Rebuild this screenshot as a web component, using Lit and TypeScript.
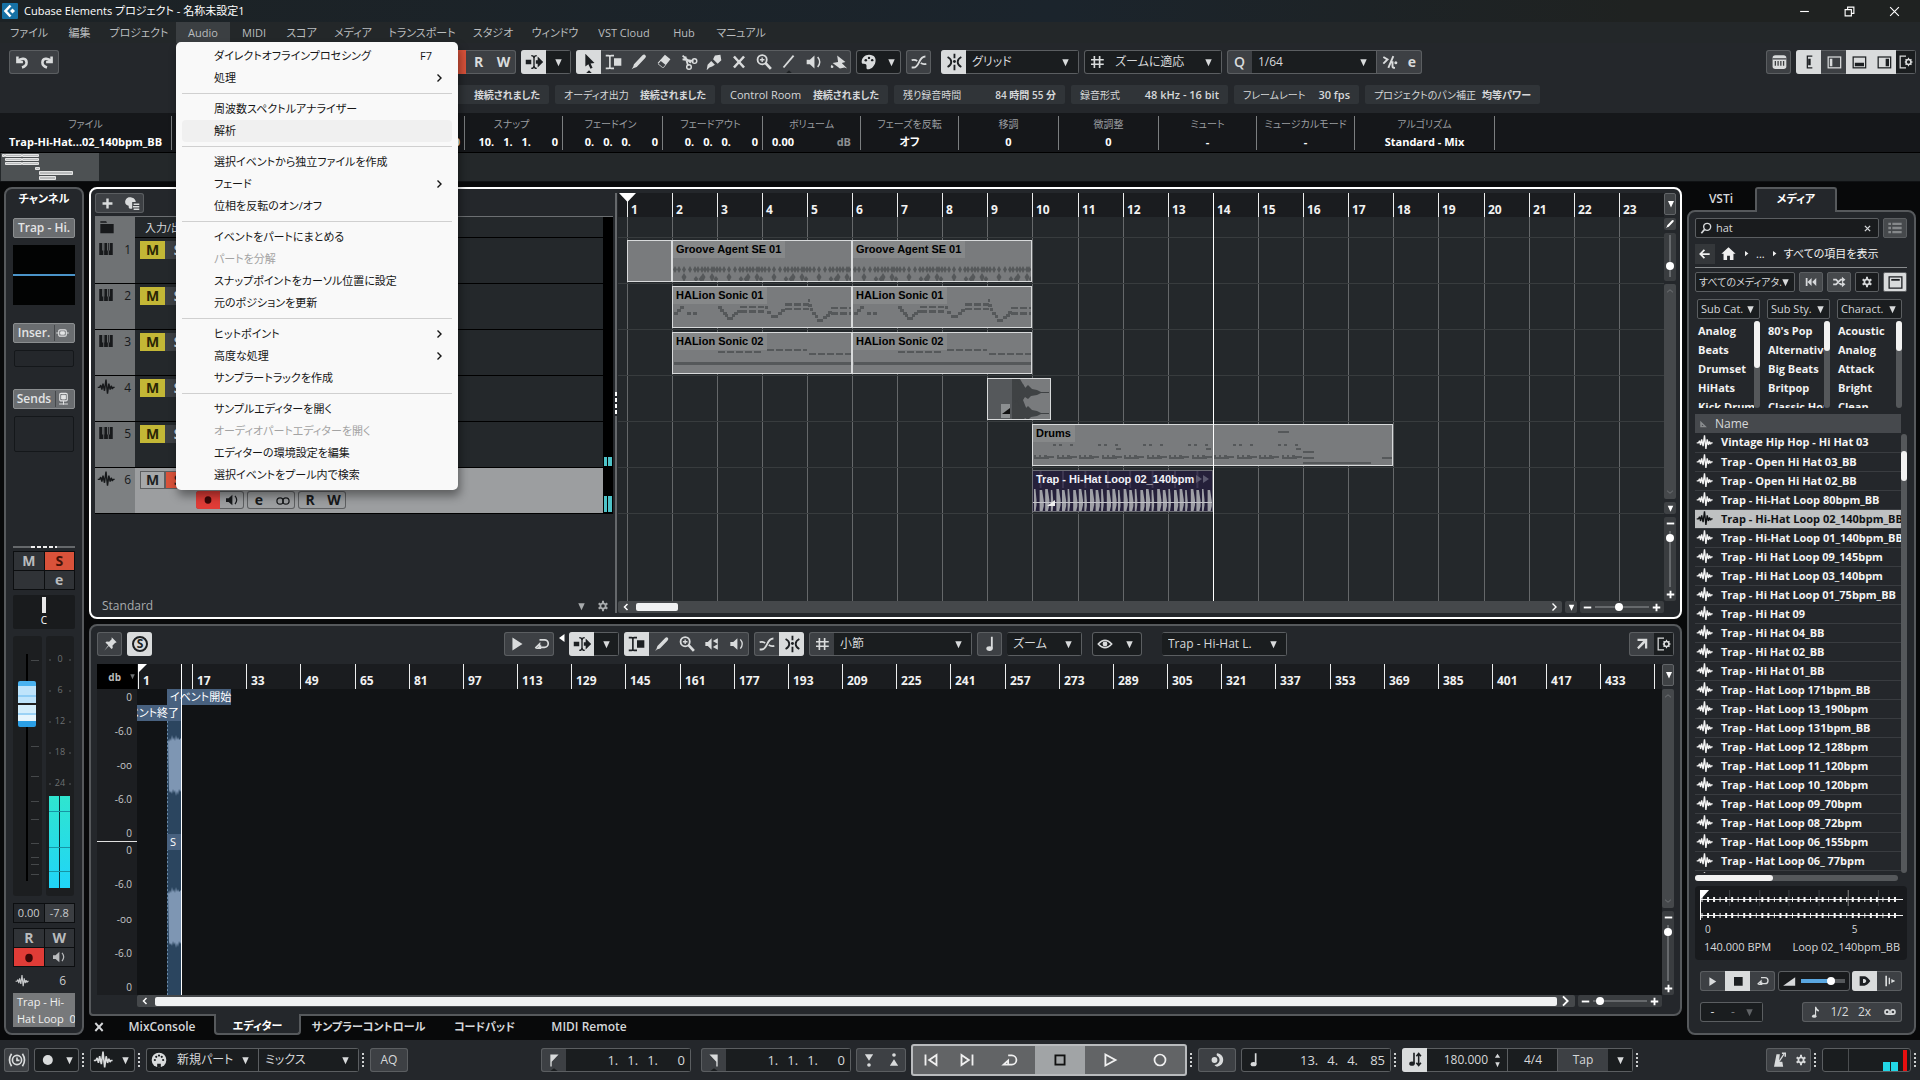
import { LitElement, html, svg, css, nothing } from "lit";
import { customElement } from "lit/decorators.js";
import { styleMap } from "lit/directives/style-map.js";

const ICONS: Record<string, unknown> = {
  undo: svg`<path d="M7 6v6h6M8 11c3-4 9-3 9 1.500c0 3-2 4.500-5 5.500" fill="none" stroke="currentColor" stroke-width="2.800"/>`,
  redo: svg`<path d="M17 6v6h-6M16 11c-3-4-9-3-9 1.500c0 3 2 4.500 5 5.500" fill="none" stroke="currentColor" stroke-width="2.800"/>`,
  auto: svg`<path d="M3 9.500h6v5h-6zM14 10h2v-4l6 6-6 6v-4h-2z"/><path d="M9 5q3 0 3 3v8q0 3-3 3M15 5q-3 0-3 3v8q0 3 3 3" fill="none" stroke="currentColor" stroke-width="1.500"/>`,
  pointer: svg`<path d="M8 3v14l3.300-2.600 2.300 5 2.300-1-2.200-4.900 4.300-.5zM9 24l3-3 3 3z"/>`,
  range: svg`<path d="M3 5h3q1 0 1.500.7q.5-.7 1.500-.7h3M3 19h3q1 0 1.500-.7q.5.7 1.500.7h3M7.500 5v14" fill="none" stroke="currentColor" stroke-width="1.800"/><path d="M12 8h8v8h-8z"/>`,
  pencil: svg`<path d="M5 19l1.500-4.500 9-9.500q2-2 3.500-.5t-.5 3.500l-9 9.500zM4 20l2-1-1-1z"/>`,
  eraser: svg`<path d="M13 4l6 5-7.500 9.500-6.500-5.500zM8.500 11l-3 3.500 5 4 3-3.500z" fill-rule="evenodd"/>`,
  scissors: svg`<path d="M5 5l9 8M5 9l12 2M8 6l3 10" fill="none" stroke="currentColor" stroke-width="2"/><circle cx="18" cy="11" r="2.500" fill="none" stroke="currentColor" stroke-width="1.600"/><circle cx="12" cy="17.500" r="2.500" fill="none" stroke="currentColor" stroke-width="1.600"/>`,
  glue: svg`<path d="M13 5l6-1 1 6-4 4-5-5zM9 11l4 4-3 2-3 1-3 3 1-6z"/><path d="M9 9l6 6" stroke="#3f4246" stroke-width="1.200"/>`,
  cross: svg`<path d="M6.500 6l11 12M17.500 6l-11 12" stroke="currentColor" stroke-width="2.800"/>`,
  zoom: svg`<circle cx="10" cy="9.500" r="5" fill="none" stroke="currentColor" stroke-width="2"/><path d="M7.500 9.500h5M10 7v5" stroke="currentColor" stroke-width="1.500"/><path d="M13.500 13l6 6.500" stroke="currentColor" stroke-width="3"/>`,
  line: svg`<path d="M6 18l11-13" stroke="currentColor" stroke-width="2"/><path d="M9 24l3-3 3 3z" fill="#1d2023"/>`,
  speaker: svg`<path d="M4 9.500h3.500l5-4.500v14l-5-4.500H4z"/><path d="M16 6.500q4.500 5.500 0 11" fill="none" stroke="currentColor" stroke-width="1.600"/>`,
  scrub: svg`<path d="M4 9.500h3l4.500-4.500v14l-4.500-4.500H4zM13 8.500l6-3.500v7zM13 15.500l6 3.500v-7z"/>`,
  bucket: svg`<path d="M10 5l9 7-4 1 6 6-3-1-5 1-8-6 6-1zM4 15q-2 3 0 3.500t2-1.500z"/>`,
  palette: svg`<path d="M12 4c6 0 8 4 7 8c-1 5-5 8-8 8c-3 0-1-3-2-5c-.5-1.500-5 .5-5-3c0-5 4-8 8-8z"/><circle cx="8.500" cy="10" r="1.400" fill="#1b1e20"/><circle cx="12" cy="7.500" r="1.300" fill="#1b1e20"/><circle cx="15.500" cy="10" r="1.300" fill="#1b1e20"/>`,
  xfade: svg`<path d="M4 18h2c7 0 5-12 13-12M4 10q4-1 6 1M14 13q2 2 6 1" fill="none" stroke="currentColor" stroke-width="2"/>`,
  snap: svg`<path d="M12.500 3v5M12.500 15v6M5 6.500q4 2 4 5.500q0 3.500-4 5.500M20 6.500q-4 2-4 5.500q0 3.500 4 5.500" fill="none" stroke="currentColor" stroke-width="2"/><circle cx="12.500" cy="11.500" r="1.600"/>`,
  hash: svg`<path d="M8.500 4v16M15.500 4v16M4 9h17M4 15h17" stroke="currentColor" stroke-width="2.200"/>`,
  quant: svg`<path d="M4 6l5 3-5 5M10 19l6-14M15 11v6q0 2 3 2" fill="none" stroke="currentColor" stroke-width="2.300"/><circle cx="19" cy="13" r="1.800"/>`,
  keys: svg`<rect x="5" y="4.500" width="15" height="15" rx="3"/><path d="M8 11v5M11 11v5M14 11v5M17 11v5M5 8.500h15" stroke="#3c3f42" stroke-width="1.400"/>`,
  lay1: svg`<path d="M16 5h-6v14h6" fill="none" stroke="currentColor" stroke-width="1.500"/><path d="M11 8h3v8h-3z"/>`,
  lay2: svg`<rect x="5" y="6" width="15" height="13" fill="none" stroke="currentColor" stroke-width="1.500"/><path d="M7 8h3v9H7z"/>`,
  lay3: svg`<rect x="5" y="6" width="15" height="13" fill="none" stroke="currentColor" stroke-width="1.500"/><path d="M7 13h11v4H7z"/>`,
  lay4: svg`<rect x="5" y="6" width="15" height="13" fill="none" stroke="currentColor" stroke-width="1.500"/><path d="M14 8h4v9h-4z"/>`,
  setup: svg`<path d="M12 5H5v14h7" fill="none" stroke="currentColor" stroke-width="1.500"/><circle cx="15" cy="12" r="3" fill="none" stroke="currentColor" stroke-width="2"/><path d="M15 7v2M15 15v2M10.500 12h1.500M18 12h2M11.500 8.500l1.500 1.500M17 14l1.500 1.500M18.500 8.500L17 10M13 14l-1.500 1.500" stroke="currentColor" stroke-width="1.400"/>`,
  gear: svg`<circle cx="12" cy="12" r="4.500" fill="none" stroke="currentColor" stroke-width="3"/><path d="M12 3v4M12 17v4M4.500 7.500l3 2M16.500 14.500l3 2M4.500 16.500l3-2M16.500 9.500l3-2" stroke="currentColor" stroke-width="3.400"/>`,
  plus: svg`<path d="M12 5v14M5 12h14" stroke="currentColor" stroke-width="3.400"/>`,
  preset: svg`<path d="M9 3c6 0 9 3 9 7H13v9c-5 1-5-1-5-4c-3 0-5-2-5-5c0-4 3-7 6-7zM15 12h8v2h-8zM14 15.500h9v2h-9zM15 19h8v2h-8z"/>`,
  folder: svg`<path d="M4 5h7l1 2H4zM4 8.500h16v11H4z"/>`,
  piano: svg`<path d="M3 4h4v10h1.500v6H3zM9 4h1v10h-1zM10.500 4h3v10h1v6h-5v-6h1zM15 4h1v10h-1zM17 4h4v16h-5.500v-6H17z"/>`,
  wave: svg`<path d="M1 12.500h2.500l1.500-3 1.500 6 1.500-8 2 9.500L12 2l2 19 1.800-13.500 1.700 8 1.500-5 1.500 4 1-2h2" fill="none" stroke="currentColor" stroke-width="1.900" stroke-linejoin="bevel"/>`,
  rec: svg`<ellipse cx="12" cy="12" rx="4.500" ry="5"/>`,
  dot: svg`<circle cx="13" cy="12" r="6"/>`,
  rings: svg`<circle cx="8.500" cy="12" r="3.800" fill="none" stroke="currentColor" stroke-width="1.500"/><circle cx="15.500" cy="12" r="3.800" fill="none" stroke="currentColor" stroke-width="1.500"/>`,
  pin: svg`<path d="M14 4l6 6-2 .8-3 3 .3 3-1.500 1.200-3.300-3.500L5 20l5-6.500-3.500-3.300L8 9l3 .3 3-3z"/>`,
  play: svg`<path d="M7 5v14l11-7z"/>`,
  loop: svg`<path d="M4 17l5-5v4h6a4 4 0 0 0 0-9h-6" fill="none" stroke="currentColor" stroke-width="2"/><path d="M4 18h7v-5z"/>`,
  prev: svg`<path d="M6 6v12M18 6.500v11l-8-5.500z" fill="none" stroke="currentColor" stroke-width="2"/>`,
  next: svg`<path d="M18 6v12M6 6.500v11l8-5.500z" fill="none" stroke="currentColor" stroke-width="2"/>`,
  loopo: svg`<path d="M10 7h4a5 5 0 0 1 0 10H5l5-4.500v4" fill="none" stroke="currentColor" stroke-width="1.900"/>`,
  stopo: svg`<rect x="7" y="7" width="10" height="10" fill="none" stroke="currentColor" stroke-width="2"/>`,
  playo: svg`<path d="M7 6v12l11-6z" fill="none" stroke="currentColor" stroke-width="2"/>`,
  reco: svg`<circle cx="12" cy="12" r="6" fill="none" stroke="currentColor" stroke-width="1.900"/>`,
  note: svg`<path d="M13 4h2v13h-2z"/><ellipse cx="11.500" cy="17" rx="3.500" ry="2.600"/>`,
  note8: svg`<path d="M12 5h1.500q1 3 4 4.500l-1 2-3-2v8h-1.500z"/><ellipse cx="11" cy="17.500" rx="3" ry="2.300"/>`,
  eye: svg`<path d="M3 12q9-10 18 0q-9 10-18 0z" fill="none" stroke="currentColor" stroke-width="2"/><circle cx="12" cy="12" r="3.200"/>`,
  out: svg`<path d="M6 5h13v13h-3V10.500L7.500 19l-2-2.200L13.500 8H6z"/>`,
  clock: svg`<circle cx="12" cy="12" r="5.500" fill="none" stroke="currentColor" stroke-width="2"/><path d="M12 9v3.500h3M5.500 4.500q-5 7.500 0 15M18.500 4.500q5 7.500 0 15" fill="none" stroke="currentColor" stroke-width="2"/>`,
  midi: svg`<circle cx="12" cy="12" r="8"/><g fill="#1b1e20"><circle cx="7.500" cy="12" r="1.200"/><circle cx="9" cy="8.500" r="1.200"/><circle cx="12" cy="7.200" r="1.200"/><circle cx="15" cy="8.500" r="1.200"/><circle cx="16.500" cy="12" r="1.200"/><path d="M10 16h4v4h-4z"/></g>`,
  locl: svg`<path d="M8 6h9L9.500 14v5H8z"/><path d="M8 24l4-3 4 3z" fill="#1a1d1f"/>`,
  locr: svg`<path d="M16 6H7l7.500 8v5H16z"/><path d="M8 24l4-3 4 3z" fill="#1a1d1f"/>`,
  punchi: svg`<path d="M7 5h10l-5 8z"/><circle cx="12" cy="18" r="2.200"/>`,
  puncho: svg`<path d="M7 19h10l-5-8z"/><circle cx="12" cy="6" r="2.200"/>`,
  moon: svg`<path d="M12 4c10 1 10 15 0 16q-3-1-3-2c7-1 8-8 3-11q-1-1 0-3z"/><circle cx="9" cy="12" r="3.500"/>`,
  tempo: svg`<path d="M10 4h1.800v12H10z"/><ellipse cx="8.700" cy="16" rx="3" ry="2.300"/><path d="M16 5v13M13.500 8L16 5l2.500 3M13.500 15l2.500 3 2.500-3" fill="none" stroke="currentColor" stroke-width="1.700"/>`,
  metro: svg`<path d="M9 5h4l-1 9h4l1 6H6z"/><path d="M12 14l6-9" stroke="currentColor" stroke-width="1.500"/><path d="M15.500 4h4v4" fill="none" stroke="currentColor" stroke-width="1.800"/>`,
  search: svg`<circle cx="14" cy="10" r="6" fill="none" stroke="currentColor" stroke-width="2.400"/><path d="M10 14l-6 7" stroke="currentColor" stroke-width="3"/>`,
  list: svg`<path d="M2 4h4v3.500H2zM8 4h14v3.500H8zM2 10.200h4v3.500H2zM8 10.200h14v3.500H8zM2 16.500h4V20H2zM8 16.500h14V20H8z"/>`,
  back: svg`<path d="M4 12h16M11 5l-7 7 7 7" fill="none" stroke="currentColor" stroke-width="3"/>`,
  home: svg`<path d="M12 3l10 9.500h-3V21h-5v-6h-4v6H5v-8.500H2z"/>`,
  rew: svg`<path d="M3 5h3v14H3zM13 5v14l-7-7zM21 5v14l-7-7z"/>`,
  shuffle: svg`<path d="M2 8h5l8 8h3M2 16h5l8-8h3" fill="none" stroke="currentColor" stroke-width="3"/><path d="M17 3l6 5-6 5zM17 11l6 5-6 5z"/>`,
  frame: svg`<path d="M3 4h18v16H3z" fill="none" stroke="currentColor" stroke-width="1.800"/><path d="M6 7h12v2.500H6z"/>`,
  stop: svg`<path d="M6 6h13v13H6z"/>`,
  ramp: svg`<path d="M3 18L20 6v12z"/>`,
  dgate: svg`<path d="M4 5h7q4 0 9 7q-5 7-9 7H4zM9 9v6h2q2 0 3-3q-1-3-3-3z" fill-rule="evenodd"/>`,
  beats: svg`<path d="M5 4h2.500v16H5zM10 7h2v10h-2zM14 9l6 3-6 3z"/>`,
  tape: svg`<circle cx="7" cy="12" r="3.600" fill="none" stroke="currentColor" stroke-width="2.800"/><circle cx="17" cy="12" r="3.600" fill="none" stroke="currentColor" stroke-width="2.800"/><path d="M7 15.800h10" stroke="currentColor" stroke-width="2.400"/>`,
  insert: svg`<rect x="6" y="7" width="12" height="10" rx="2" fill="none" stroke="currentColor" stroke-width="1.800"/><path d="M9 10h6v4H9zM2 12h4M18 12h4" stroke="currentColor" stroke-width="1.500"/>`,
  send: svg`<rect x="6" y="3" width="12" height="12" rx="2" fill="none" stroke="currentColor" stroke-width="1.800"/><path d="M9 6h6v6H9zM12 15v6M5 20h14" stroke="currentColor" stroke-width="1.500"/>`,
  down: svg`<path d="M6 6h12l-6 13z"/>`,
  up: svg`<path d="M5 18h14L12 7z"/>`,
  right: svg`<path d="M8 5l9 7-9 7z"/>`,
  left: svg`<path d="M17 4L6 12l11 8z"/>`,
  chevr: svg`<path d="M9 5l7 7-7 7" fill="none" stroke="currentColor" stroke-width="2.800"/>`,
  chevl: svg`<path d="M15 6l-6 6 6 6" fill="none" stroke="currentColor" stroke-width="3"/>`,
  chevu: svg`<path d="M5 15l7-6 7 6" fill="none" stroke="currentColor" stroke-width="2"/>`,
  chevd: svg`<path d="M5 9l7 6 7-6" fill="none" stroke="currentColor" stroke-width="2"/>`,
  minus: svg`<path d="M2 12h20" stroke="currentColor" stroke-width="5"/>`,
  add: svg`<path d="M2 12h20M12 2v20" stroke="currentColor" stroke-width="5"/>`,
  sort: svg`<path d="M3 4v16h16zM7 13l4 4H7z" fill-rule="evenodd"/>`,
  min: svg`<path d="M5 12h14" stroke="currentColor" stroke-width="1.800"/>`,
  max: svg`<path d="M5 9h10v10H5zM9 9V5h10v10h-4" fill="none" stroke="currentColor" stroke-width="1.800"/>`,
  close: svg`<path d="M5 5l14 14M19 5L5 19" stroke="currentColor" stroke-width="1.800"/>`,
  clear: svg`<path d="M5 5l14 14M19 5L5 19" stroke="currentColor" stroke-width="3.500"/>`,
};

const ic = (name: string, size = 24) =>
  html`<svg class="ic" viewBox="0 0 24 24" width=${size} height=${size} fill="currentColor" aria-hidden="true">${ICONS[name]}</svg>`;

const btn = (icon: string, label: string, cls = "", size = 22) =>
  html`<button class="b ${cls}" aria-label=${label} title=${label}>${ic(icon, size)}</button>`;

const tbtn = (text: string, cls = "", label = text) =>
  html`<button class="b t ${cls}" aria-label=${label}>${text}</button>`;

const drop = (value: string, label: string, cls = "") =>
  html`<label class="dd ${cls}"><select aria-label=${label}><option>${value}</option></select>${ic("down", 13)}</label>`;

const pos = (...parts: string[]) => html`<span class="pos">${parts.map((p) => html`<span>${p}</span>`)}</span>`;

const range = (label: string, value: number, cls = "") =>
  html`<input class="rng ${cls}" type="range" aria-label=${label} .value=${String(value)} />`;

type Item = { t: string; key?: string; sub?: boolean; off?: boolean; hot?: boolean };
const MENU: Item[][] = [
  [{ t: "ダイレクトオフラインプロセシング", key: "F7" }, { t: "処理", sub: true }],
  [{ t: "周波数スペクトルアナライザー" }, { t: "解析", hot: true }],
  [{ t: "選択イベントから独立ファイルを作成" }, { t: "フェード", sub: true }, { t: "位相を反転のオン/オフ" }],
  [
    { t: "イベントをパートにまとめる" },
    { t: "パートを分解", off: true },
    { t: "スナップポイントをカーソル位置に設定" },
    { t: "元のポジションを更新" },
  ],
  [{ t: "ヒットポイント", sub: true }, { t: "高度な処理", sub: true }, { t: "サンプラートラックを作成" }],
  [
    { t: "サンプルエディターを開く" },
    { t: "オーディオパートエディターを開く", off: true },
    { t: "エディターの環境設定を編集" },
    { t: "選択イベントをプール内で検索" },
  ],
];

const MENUBAR = ["ファイル", "編集", "プロジェクト", "Audio", "MIDI", "スコア", "メディア", "トランスポート", "スタジオ", "ウィンドウ", "VST Cloud", "Hub", "マニュアル"];

const STATUS = [
  ["", "接続されました"],
  ["オーディオ出力", "接続されました"],
  ["Control Room", "接続されました"],
  ["残り録音時間", "84 時間 55 分"],
  ["録音形式", "48 kHz - 16 bit"],
  ["フレームレート", "30 fps"],
  ["プロジェクトのパン補正", "均等パワー"],
];
const latin = (s: string) => (/^[\x20-\x7e]+$/.test(s) ? "latin" : "");

const FILES = [
  "Vintage Hip Hop - Hi Hat 03", "Trap - Open Hi Hat 03_BB", "Trap - Open Hi Hat 02_BB", "Trap - Hi-Hat Loop 80bpm_BB",
  "Trap - Hi-Hat Loop 02_140bpm_BB", "Trap - Hi-Hat Loop 01_140bpm_BB", "Trap - Hi Hat Loop 09_145bpm", "Trap - Hi Hat Loop 03_140bpm",
  "Trap - Hi Hat Loop 01_75bpm_BB", "Trap - Hi Hat 09", "Trap - Hi Hat 04_BB", "Trap - Hi Hat 02_BB", "Trap - Hi Hat 01_BB",
  "Trap - Hat Loop 171bpm_BB", "Trap - Hat Loop 13_190bpm", "Trap - Hat Loop 131bpm_BB", "Trap - Hat Loop 12_128bpm",
  "Trap - Hat Loop 11_120bpm", "Trap - Hat Loop 10_120bpm", "Trap - Hat Loop 09_70bpm", "Trap - Hat Loop 08_72bpm",
  "Trap - Hat Loop 06_155bpm", "Trap - Hat Loop 06_ 77bpm", "",
];

const FILTERS = [
  { name: "Sub Cat.", items: ["Analog", "Beats", "Drumset", "HiHats", "Kick Drum"], cls: "long" },
  { name: "Sub Sty.", items: ["80's Pop", "Alternative", "Big Beats", "Britpop", "Classic House"], cls: "" },
  { name: "Charact.", items: ["Acoustic", "Analog", "Attack", "Bright", "Clean"], cls: "" },
];

const BAR = 45.11;
const barX = (bar: number) => Math.floor(9 + (bar - 1) * BAR);
const dash = (x1: number, x2: number, y: number, h = 2) => {
  const out = [];
  for (let x = x1; x < x2; x += 9) out.push(svg`<rect x=${x} y=${y} width=${Math.min(7, x2 - x)} height=${h}/>`);
  return out;
};

const groove = () => svg`${[0, 1, 2, 3].map((b) => svg`
  ${[2, 6, 11, 17, 22, 25, 29, 32, 35, 39, 41, 44].map((x) => svg`<path d="M${b * 45 + x} 25l2 3.500-2 3.500-2-3.500z"/>`)}
  ${[11, 30, 39].map((x) => svg`<path d="M${b * 45 + x} 32l2.500 4-2.500 5-2.500-5z"/>`)}
  ${[23, 28, 43].map((x) => svg`<path d="M${b * 45 + x} 35l2.300 3-2.300 3-2.300-3z"/>`)}`)}`;

const N1: number[][] = [
  [1, 25, 4], [4, 22, 4], [7, 19, 4], [14, 25, 4], [20, 25, 4],
  [45, 19, 4], [47, 22, 4], [50, 25, 4], [52, 27, 3], [54, 30, 6], [59, 27, 3], [61, 25, 4], [64, 23, 4],
  [92, 19, 3], [94, 24, 4], [98, 28, 7], [105, 25, 4], [108, 22, 4], [135, 12, 2], [135, 17, 4], [137, 21, 3], [139, 25, 4],
  [142, 28, 3], [144, 32, 6], [150, 29, 4], [153, 27, 4], [155, 24, 4],
];
const halion1 = () => svg`${N1.map(([x, y, w]) => svg`<rect x=${x} y=${y} width=${w} height="3"/>`)}
  ${dash(67, 91, 19, 2)}${dash(67, 91, 23, 3)}${dash(112, 136, 16, 3)}${dash(112, 136, 21, 2)}${dash(158, 179, 20, 2)}${dash(158, 179, 25, 3)}`;
const halion2 = () => svg`${dash(45, 90, 18)}${dash(94, 134, 16)}${dash(136, 179, 20)}<rect x="1" y="29" width="178" height="3"/>`;
const drums = () => svg`${[0, 1, 2, 3, 4, 5].map((b) => svg`
    <rect x=${b * 45 + 20} y="19" width="3" height="2"/><rect x=${b * 45 + 26} y="19" width="3" height="2"/>
    <rect x=${b * 45 + 37} y="19" width="3" height="2"/>${b % 2 ? svg`<rect x=${b * 45 + 38} y="23" width="5" height="2"/>` : nothing}
    ${[0, 23].map((o) => svg`<path d="M${b * 45 + o + 1} 30h2v2h3v-2h2v2h3v-2h3v1h7v2h-5v1h-15z"/>`)}`)}
  <rect x="245" y="6" width="11" height="2"/><rect x="270" y="26" width="11" height="2"/><rect x="270" y="32" width="11" height="2"/>
  <rect x="270" y="37" width="68" height="2"/><rect x="349" y="32" width="10" height="2"/>`;
const burst = (y: number) => svg`<path d="M24 ${y - 11}l3 3 2-3 3 8 3-3 2 4 3-3 4 4 5 1 4 2h8v1h-8l-4 2-6 1-3 3-3-2-3 4-2-5-3 6-3-2-2 2z"/>`;
const clap = () => svg`<rect width="25" height="42" fill="#55585b"/><path d="M24 0h8l7 12-4 9 4 10-7 10h-8z" fill="#3f4244"/><g fill="#3f4244">${burst(11)}${burst(32)}</g>
  <rect x="13" y="25" width="9" height="14" fill="#8c8f91"/><path d="M14 35l8-6v6z" fill="#111"/>`;
const hats = () => {
  const out = [];
  for (let i = 0; i < 32; i++) {
    const x = i * 5.6 + 1;
    const w = i % 3 === 0 ? 2.5 : 4.2;
    out.push(svg`<path d="M${x} ${18 + (i % 2)}h${w * 0.6}l${w * 0.4} 11v5l-${w * 0.4} 7h-${w * 0.6}z" fill="#9fa0a6"/>`);
    if (i % 4 === 1) out.push(svg`<path d="M${x} 0h2v17h-2z" fill="#3c3550"/>`);
  }
  return svg`${out}<rect y="31" width="180" height="1" fill="#c4c4ca"/><path d="M14 35l8-6v6z" fill="#eee"/>
    <path d="M163 4v8l6-4zM170 4v8l6-4z" fill="#5c5a70"/>`;
};

type Clip = { row: number; from: number; to: number; name?: string; art?: () => unknown; cls?: string };
const CLIPS: Clip[] = [
  { row: 0, from: 1, to: 2 },
  { row: 0, from: 2, to: 6, name: "Groove Agent SE 01", art: groove },
  { row: 0, from: 6, to: 10, name: "Groove Agent SE 01", art: groove },
  { row: 1, from: 2, to: 6, name: "HALion Sonic 01", art: halion1 },
  { row: 1, from: 6, to: 10, name: "HALion Sonic 01", art: halion1 },
  { row: 2, from: 2, to: 6, name: "HALion Sonic 02", art: halion2 },
  { row: 2, from: 6, to: 10, name: "HALion Sonic 02", art: halion2 },
  { row: 3, from: 9, to: 10.42, art: clap },
  { row: 4, from: 10, to: 18, name: "Drums", art: drums },
  { row: 5, from: 10, to: 14, name: "Trap - Hi-Hat Loop 02_140bpm", art: hats, cls: "audio" },
];

@customElement("app-root")
export class AppRoot extends LitElement {
  static styles = css`
    :host {
      display: flex; flex-direction: column; height: 100vh; overflow: hidden; background: #08090a; color: #d6d8da;
      font: 12px/16px "Open Sans", "Noto Sans CJK JP", sans-serif; font-feature-settings: "palt";
    }
    *, *::before, *::after { box-sizing: border-box; }
    ul { list-style: none; margin: 0; padding: 0; }
    h2 { margin: 0; font-size: 12px; line-height: 16px; }
    button, select, input { font: inherit; font-feature-settings: inherit; color: inherit; margin: 0; padding: 0; border: 0; background: none; border-radius: 0; }
    .ic { display: block; flex: none; }
    .push { margin-left: auto; }

    .title { display: flex; align-items: center; gap: 6px; height: 22px; padding: 0 4px 0 2px; color: #fff; font-size: 11px; background: linear-gradient(90deg, #1c2225, #1b242c 55%, #1f2221 85%); }
    .logo { width: 16px; height: 16px; }
    .win { display: flex; margin-left: auto; gap: 30px; padding-right: 14px; }
    .menubar { display: grid; grid-template-columns: 56px 45px 74px 54px 48px 47px 56px 82px 60px 64px 74px 46px 68px; height: 21px; padding-left: 1px; background: #232729; color: #b9bcbe; font-size: 11px; }
    .menubar > li { position: relative; display: grid; }
    .menubar > li > button { white-space: nowrap; }
    .menubar .open { background: #3b3f42; }
    .popup { position: absolute; z-index: 10; left: 0; top: 20px; width: 282px; padding: 3px 6px 4px; border-radius: 5px; background: #f9f9f9; color: #151515; box-shadow: 2px 6px 10px rgba(0, 0, 0, 0.4); }
    .popup ul + ul { margin-top: 4px; padding-top: 4px; border-top: 1px solid #d0d0d0; }
    .popup button { display: flex; align-items: center; width: 100%; height: 22px; padding: 0 7px 0 32px; border-radius: 4px; text-align: left; white-space: nowrap; }
    .popup .hot { background: #f0f0f0; }
    .popup .off { color: #a3a3a3; }
    .popup .key { margin-left: auto; padding-right: 13px; }
    .popup .ic { margin-left: auto; }

    .toolbar { display: flex; gap: 5px; height: 38px; padding: 7px 4px 0 9px; background: #24272b; }
    .grp { display: flex; height: 24px; border-radius: 3px; overflow: hidden; background: #3d4044; box-shadow: inset 0 0 0 1px #5b5e61; flex: none; }
    .grp.dark { background: #1a1d1f; }
    .b { display: grid; place-items: center; width: 25px; flex: none; color: #d9dbdc; overflow: hidden; }
    .b.on { background: #d9dbdc; color: #1c1f22; }
    .b.s20 { width: 20px; }
    .b.dk { background: #1a1d1f; box-shadow: inset 0 1px #5b5e61, inset 0 -1px #5b5e61, inset -1px 0 #5b5e61; }
    .b.t { font-weight: 700; font-size: 14px; }
    .b.q { font-weight: 600; }
    .b.plain { font-weight: 400; font-size: 12px; }
    .b.red { background: #d9523a; color: #2a0d08; }
    .b.rec { background: #e03c37; color: #3a0707; }
    .dd { display: grid; grid-template-columns: minmax(0, 1fr) 20px; align-items: center; background: #1a1d1f; box-shadow: inset 0 1px #5b5e61, inset 0 -1px #5b5e61, inset -1px 0 #5b5e61; }
    .dd select { grid-area: 1 / 1 / 2 / 3; appearance: none; width: 100%; height: 100%; padding: 0 18px 0 6px; outline: 0; }
    .dd .ic { grid-area: 1 / 2; pointer-events: none; color: #d9dbdc; }
    .w38 { width: 38px; } .w50 { width: 50px; } .w75 { width: 75px; } .w88 { width: 88px; } .w100 { width: 100px; } .w113 { width: 113px; } .w125 { width: 125px; } .w138 { width: 138px; }
    .gap5 { margin-left: 5px; }
    .gap15 { margin-left: 15px; }
    .from-menu { margin-left: 377px; }

    .status { display: grid; grid-template-columns: 143px 160px 167px 171px 157px 125px 175px; gap: 6px; height: 32px; padding: 4px 0 9px 406px; background: #24272b; font-size: 10px; }
    .status li { display: flex; justify-content: space-between; align-items: center; padding: 0 9px; background: #303438; border-radius: 2px; white-space: nowrap; }
    .status b { font-weight: 600; margin-left: auto; }
    .status .latin { font-size: 11px; }

    .info { display: grid; grid-template-columns: 172px 293px 98px 100px 100px 98px 98px 100px 100px 98px 98px 140px; height: 40px; padding: 3px 0 2px; background: #15171a; border-bottom: 1px solid #000; font-size: 10px; }
    .info li { display: flex; flex-direction: column; justify-content: space-between; align-items: center; border-right: 1px solid #7b7e80; color: #9a9da0; white-space: nowrap; }
    .info b { color: #fff; font-size: 11px; font-weight: 700; line-height: 17px; }
    .info .end { align-items: stretch; padding-right: 4px; text-align: right; }
    .info .end > span:first-child { text-align: center; }
    .info .wide { display: flex; justify-content: space-between; align-self: stretch; padding: 0 9px; }
    .info .wide span { color: #8d9092; }
    .pos { display: flex; justify-content: flex-end; gap: 9px; white-space: nowrap; }
    .pos span:last-child { min-width: 18px; text-align: right; }
    .overview { display: flex; height: 29px; background: #24282a; border-bottom: 1px solid #101214; }

    .main { flex: 1; min-height: 0; display: grid; grid-template-columns: 80px minmax(0, 1fr) 229px; gap: 5px; padding: 5px 4px 0; }
    .panel { border: 2px solid #56595c; border-radius: 8px; background: #24272b; }
    .channel { display: flex; flex-direction: column; align-items: stretch; margin-bottom: 5px; padding: 2px 7px 6px; color: #c9cbcd; }
    .channel h2 { text-align: center; font-size: 11px; color: #fff; padding-bottom: 11px; white-space: nowrap; }
    .cbtn { display: flex; align-items: center; justify-content: center; height: 20px; background: #6a6d70; border: 1px solid #8b8e90; border-radius: 2px; color: #e3e4e5; font-weight: 600; font-size: 12px; white-space: nowrap; }
    .cbtn .ic { border-left: 1px solid #45484b; margin-left: 4px; }
    .eq { display: flex; align-items: center; height: 60px; margin: 7px 0 18px; background: #020303; }
    .eq i { flex: 1; height: 2px; background: #4a93c8; }
    .slot { height: 17px; margin: 7px 1px 22px; border: 1px solid #14171a; border-radius: 2px; }
    .slot.big { height: 36px; margin-bottom: 0; }
    .grab { margin-top: auto; height: 2px; background: linear-gradient(90deg, #65686b 18px, transparent 18px 44px, #65686b 44px), repeating-linear-gradient(90deg, #eee 0 4px, transparent 4px 6px); }
    .quad { display: grid; grid-template-columns: 1fr 1fr; grid-auto-rows: 18px; gap: 1px; margin-top: 3px; padding: 1px; background: #0c0e10; }
    .quad + .quad { margin-top: 5px; }
    .quad .b { width: auto; background: #303337; color: #b9bbbd; }
    .quad .b.red { background: #d9523a; color: #451208; }
    .quad .b.rec { background: #e03c37; color: #3a0707; }
    .quad .val { font-size: 11px; text-align: center; line-height: 17px; background: #24272b; }
    .quad .val + .val { background: #3b3e42; }
    .pan { display: flex; flex-direction: column; align-items: center; height: 34px; margin-top: 5px; padding-top: 2px; background: #191b1d; border-radius: 2px; font-size: 10px; color: #fff; line-height: 15px; }
    .pan i { width: 4px; height: 16px; background: #e8e8e8; }
    .strip { display: grid; grid-template-columns: 1fr 1fr; gap: 4px; height: 260px; margin: 7px 0 4px; }
    .strip > * { background: #1c1e20; border-radius: 3px; overflow: hidden; }
    .fader { display: grid; }
    .fader input, .fader svg { grid-area: 1 / 1; }
    .fader input { appearance: none; writing-mode: vertical-lr; direction: rtl; width: 28px; height: 240px; margin-top: 12px; }
    .fader input::-webkit-slider-thumb { appearance: none; width: 18px; height: 46px; border-radius: 2px; background: linear-gradient(#49b2f0 0 5px, #bfe4fb 5px 14px, #8fcdf5 14px 16px, #bfe4fb 16px 22px, #222 22px 24px, #d4eefc 24px 32px, #9bd2f5 32px 34px, #e6f5fd 34px 40px, #2b9fe6 40px); }
    .num { display: flex; justify-content: space-between; align-items: center; padding: 6px 9px 4px 2px; }
    .cname { background: #77797b; color: #f0f0f0; font-size: 11px; line-height: 17px; padding: 0 4px; height: 34px; overflow: hidden; white-space: nowrap; }

    .center { display: grid; grid-template-columns: minmax(0, 1fr); grid-template-rows: minmax(0, 432fr) minmax(0, 397fr) 24px; min-height: 0; min-width: 0; }
    .project { min-height: 0; display: grid; grid-template-columns: 520px 3px minmax(0, 1fr) 12px; border-color: #fff; padding: 4px; }
    .tracks { display: flex; flex-direction: column; min-height: 0; padding-right: 2px; }
    .thead { height: 24px; border-bottom: 1px solid #6c6f72; }
    .thead .grp { width: 49px; height: 20px; }
    .thead .b { width: 24px; }
    .tbody { display: grid; grid-template-columns: minmax(0, 1fr) 10px; background: #000; }
    .tr { display: grid; grid-template-columns: 40px 1fr; height: 46px; border-bottom: 1px solid #000; background: #24282b; }
    .tr.first { height: 21px; }
    .tr.sel { background: #9c9ea0; }
    .tr .hd { display: flex; align-items: flex-start; justify-content: space-between; padding: 2px 4px 0 2px; background: #6f7274; color: #17191b; }
    .tr.first .hd { padding-top: 0; }
    .tr.first .nm { padding: 3px 10px; font-size: 11px; white-space: nowrap; }
    .tr.sel .hd { background: #7d8082; }
    .tr .hd span { line-height: 20px; }
    .tr .ct { display: grid; align-content: start; gap: 2px; padding: 3px 5px; }
    .ms { display: flex; height: 18px; }
    .ms .b { background: #3d4044; }
    .ms .b.y { background: #c3b736; color: #2a2705; }
    .sel .ms .b { color: #1c1f22; background: #a6a8aa; box-shadow: inset 0 0 0 1px #5d5f61; }
    .sel .ms .b.red { background: #d9523a; }
    .sel .sub { display: flex; gap: 3px; padding-left: 56px; }
    .sel .sub .grp { height: 18px; background: transparent; box-shadow: inset 0 0 0 1px #5d5f61; }
    .sel .sub .b { width: 24px; color: #17191b; }
    .sel .sub .b.rec { background: #e03c37; color: #3a0707; }
    .meter { display: flex; flex-direction: column; padding: 0 1px; }
    .meter i { display: block; height: 46px; border-bottom: 2px solid #000; }
    .meter i:first-child { height: 21px; }
    .meter .lv { background: linear-gradient(90deg, transparent 3px, #000 3px 4px, transparent 4px), linear-gradient(#4ec3c8, #4ec3c8) bottom / 100% 9px no-repeat; }
    .meter .hi { background: linear-gradient(90deg, transparent 3px, #000 3px 4px, transparent 4px), linear-gradient(#4ec3c8, #4ec3c8) bottom / 100% 16px no-repeat; }
    .tfoot { display: flex; align-items: center; gap: 8px; margin-top: auto; height: 14px; padding: 0 3px 0 7px; color: #a8abad; }
    .split { width: 2px; background: linear-gradient(#65686b, #65686b) top / 2px 199px no-repeat, repeating-linear-gradient(#fff 0 4px, #24272b 4px 6px) 0 199px / 2px 24px no-repeat, linear-gradient(#65686b, #65686b) 0 223px / 2px 100% no-repeat; }

    .time { display: grid; grid-template-rows: 24px minmax(0, 1fr) 12px; min-width: 0; position: relative; overflow: hidden; }
    .ruler { position: relative; overflow: hidden; background: #1a1c1f; color: #f2f2f2; font-weight: 700; }
    .ruler span { position: absolute; top: 0; bottom: 0; border-left: 1px solid #eceded; padding: 9px 0 0 4px; line-height: 16px; }
    .time .ruler span { padding-left: 3px; }
    .head { position: absolute; left: 1px; top: 0; z-index: 2; }
    .canvas { position: relative; overflow: hidden; background: #24282b; }
    .vl { position: absolute; top: 0; bottom: 0; width: 1px; background: #65686a; }
    .hl { position: absolute; left: 0; right: 0; height: 1px; background: #383c3e; }
    .clip { position: absolute; height: 42px; background: #797b7d; border: 1px solid #d8dadb; overflow: hidden; color: #000; font: 700 11px/16px "Liberation Sans", sans-serif; }
    .clip svg { position: absolute; inset: 0; fill: #55585a; }
    .clip span { position: absolute; left: 0; top: 0; padding: 0 4px 1px 3px; background: #868889; white-space: nowrap; }
    .clip.audio { background: #25203a; border-color: #6b6c74; color: #f2f2f8; }
    .clip.audio span { background: none; }
    .cursor { position: absolute; top: 0; bottom: 12px; width: 1px; background: #fff; z-index: 3; }
    .hscroll { display: flex; gap: 3px; min-width: 0; }
    .sb { display: flex; align-items: center; flex: 1; min-width: 0; background: #45484b; border-radius: 2px; padding: 0 2px; color: #fff; }
    .sb .thumb { height: 8px; border-radius: 2px; background: #f0f1f2; width: 42px; margin-left: 4px; }
    .sb .thumb.full { width: auto; flex: 1; height: 9px; }
    .sb button { display: grid; place-items: center; }
    .zoomh { display: flex; align-items: center; justify-content: space-between; width: 84px; background: #3a3d40; border-radius: 2px; padding: 0 3px; color: #fff; }
    .zoomh .rng { width: 54px; }
    .sq { display: grid; place-items: center; width: 12px; background: #3f4245; border-radius: 2px; color: #fff; }
    .rail { display: flex; flex-direction: column; gap: 3px; padding-bottom: 12px; }
    .rail .sq { height: 12px; flex: none; }
    .rail .sq.tall { height: 22px; border: 1px solid #626568; }
    .rail .box { display: flex; flex-direction: column; align-items: center; justify-content: space-between; width: 12px; height: 48px; background: #3a3d40; border-radius: 2px; padding: 2px 0; color: #fff; flex: none; }
    .rail .zoomv { height: 84px; }
    .rail .vs { flex: 1; min-height: 0; background: #45484b; color: #777a7d; }
    .rng { appearance: none; height: 10px; background: linear-gradient(#66696c, #66696c) center / 100% 2px no-repeat; }
    .rng::-webkit-slider-thumb { appearance: none; width: 8px; height: 8px; border-radius: 50%; background: #fff; }
    .rng.v { writing-mode: vertical-lr; width: 10px; height: 56px; background: linear-gradient(#66696c, #66696c) center / 2px 100% no-repeat; }
    .rng.short { height: 42px; }

    .editor { min-height: 0; margin-top: 5px; display: flex; flex-direction: column; gap: 8px; padding: 6px 6px 7px; border-bottom-left-radius: 4px; }
    .ebar { display: flex; gap: 5px; }
    .ebar .mid { margin-left: 347px; }
    .tri { width: 5px; color: #fff; display: flex; justify-content: center; }
    .egrid { flex: 1; min-height: 0; display: grid; grid-template-columns: 40px minmax(0, 1fr) 12px; grid-template-rows: 25px minmax(0, 1fr) 12px; }
    .db { display: flex; align-items: center; justify-content: flex-end; gap: 7px; background: #000; font-size: 10px; font-weight: 700; color: #bbb; }
    .db .ic { color: #6d7072; }
    .scale { display: grid; grid-template-rows: 1fr 1fr; background: #1c1e21; font-size: 10px; line-height: 16px; text-align: right; }
    .scale li { display: flex; flex-direction: column; justify-content: space-between; padding-right: 5px; color: #c6c8ca; }
    .scale li:first-child { border-bottom: 1px solid #e0e0e0; }
    .wavearea { position: relative; background: #111315; overflow: hidden; }
    .wv { position: absolute; left: 30px; top: 0; width: 14px; height: 100%; }
    .tag { position: absolute; height: 16px; padding: 0 3px; background: #48617f; color: #fff; font-size: 11px; white-space: nowrap; line-height: 16px; }
    .tag.start { left: 30px; top: 0; width: 64px; }
    .tag.endt { left: 0; top: 16px; width: 44px; overflow: hidden; display: flex; justify-content: flex-end; padding: 0 2px; }
    .tag.s { left: 30px; top: calc(50% - 8px); width: 14px; }
    .ecur { position: absolute; left: 44px; top: 0; bottom: 0; width: 1px; background: #fff; }
    .egrid .hscroll { grid-column: 2 / 3; }
    .egrid .rail { grid-column: 3; grid-row: 1 / 4; }
    .zone { display: flex; align-items: flex-start; font-weight: 600; min-height: 0; }
    .zone button { height: 22px; white-space: nowrap; }
    .zone .x { width: 20px; display: grid; place-items: center; }
    .zone .m { width: 105px; padding-left: 1px; }
    .zone .cur { position: relative; width: 87px; height: 21px; margin-top: -2px; padding-top: 4px; background: #24272b; border: 2px solid #56595c; border-top: 0; border-radius: 0 0 4px 4px; color: #fff; }
    .zone .jp { font-size: 11px; }
    .zone .n1 { width: 135px; } .zone .n2 { width: 97px; } .zone .n3 { width: 112px; }

    .side { display: flex; flex-direction: column; margin-bottom: 5px; min-height: 0; }
    .stabs { display: flex; height: 25px; flex: none; margin-bottom: -2px; position: relative; }
    .stabs button { width: 68px; font-weight: 600; padding-bottom: 2px; }
    .stabs .cur { width: 82px; background: #24272b; border: 2px solid #56595c; border-bottom: 0; border-radius: 3px 3px 0 0; color: #fff; font-size: 11px; padding-bottom: 4px; }
    .media { flex: 1; min-height: 0; display: flex; flex-direction: column; padding: 6px 7px 11px 6px; }
    .searchrow { display: flex; gap: 4px; height: 20px; }
    .search { display: flex; align-items: center; flex: 1; gap: 3px; padding: 0 4px 0 3px; background: #191b1d; border: 1px solid #5b5e61; border-radius: 2px; }
    .search input { flex: 1; min-width: 0; outline: 0; font-size: 11px; }
    .search button { padding-right: 2px; }
    .sqb { display: grid; place-items: center; width: 24px; border-radius: 2px; background: #46494c; border: 1px solid #5b5e61; }
    .sqb.on { background: #d9dbdc; color: #1c1f22; }
    .sqb.dkk { background: #191b1d; }
    .sqb.dim { color: #85888a; }
    .crumbs { display: flex; align-items: center; gap: 5px; height: 30px; padding-top: 2px; border-bottom: 1px solid #888b8d; margin-bottom: 4px; color: #f0f0f0; white-space: nowrap; font-size: 11px; }
    .crumbs .bk { display: grid; place-items: center; width: 20px; height: 20px; background: #34373a; }
    .frow { display: flex; gap: 4px; height: 20px; }
    .frow .dd, .cols .dd { border: 1px solid #5b5e61; border-radius: 2px; box-shadow: none; font-size: 11px; }
    .frow .dd { flex: 1; font-size: 10px; }
    .frow .dd select, .cols .dd select { padding: 0 12px 0 3px; }
    .cols .dd, .frow .dd { grid-template-columns: minmax(0, 1fr) 15px; }
    .cols { display: grid; grid-template-columns: 63px 63px 65px; gap: 7px; margin: 7px 2px 6px; }
    .cols .dd { height: 20px; }
    .cols .lst { display: grid; grid-template-columns: minmax(0, 1fr) 6px; height: 87px; margin-top: 2px; overflow: hidden; }
    .cols ul { overflow: hidden; padding: 0 0 0 1px; color: #f2f2f2; font-weight: 700; font-size: 11px; line-height: 19px; white-space: nowrap; }
    .vbar { width: 6px; border-radius: 3px; background: #55585b; }
    .vbar i { display: block; width: 6px; height: 30px; border-radius: 3px; background: #f2f2f2; }
    .vbar.long i { height: 47px; }
    .files { flex: 1; min-height: 0; display: grid; grid-template-columns: minmax(0, 1fr) 6px; overflow: hidden; }
    .files .wrap { overflow: hidden; }
    table { width: 100%; border-collapse: collapse; table-layout: fixed; }
    th { height: 19px; background: #46494d; text-align: left; font-weight: 400; padding: 0; }
    th span { display: flex; align-items: center; gap: 6px; padding-left: 4px; height: 17px; line-height: 17px; }
    th .ic { color: #8a8d8f; }
    td { height: 19px; padding: 0; border-bottom: 1px solid #393c40; font: 700 11px/18px "Open Sans", sans-serif; color: #f4f4f4; white-space: nowrap; overflow: hidden; }
    td span { display: flex; align-items: center; gap: 8px; height: 18px; padding-left: 1px; }
    tr.pick td { background: #bfc1c2; color: #101214; }
    .files .vbar { margin-top: 20px; }
    .files .vbar i { position: relative; top: 17px; }
    .hbar { height: 6px; margin: 2px 9px 5px 0; border-radius: 3px; background: #55585b; flex: none; }
    .hbar i { display: block; width: 78px; height: 6px; border-radius: 3px; background: #f2f2f2; }
    .prev { height: 74px; flex: none; padding: 4px 4px 0 5px; background: #181a1d; border-radius: 4px; font-size: 11px; }
    .prev svg { display: block; width: 100%; height: 30px; }
    .prev .m1 { display: flex; gap: 141px; padding-left: 5px; line-height: 18px; font-size: 10px; }
    .prev .m2 { display: flex; justify-content: space-between; padding: 0 3px 0 4px; white-space: nowrap; line-height: 17px; }
    .pt { display: flex; justify-content: space-between; margin: 11px 5px 0; height: 20px; flex: none; }
    .pt .grp { height: 20px; }
    .pt .vol { align-items: center; width: 72px; background: #191b1d; padding: 0 3px; gap: 3px; }
    .pt .vol .rng { width: 44px; background: linear-gradient(90deg, #5aa7e0 30px, #55585b 30px) center / 100% 4px no-repeat; }
    .pt .dd { color: #77797b; }
    .pt .dd .ic { color: #606366; }

    .transport { display: flex; align-items: center; gap: 5px; height: 40px; padding: 0 3px 0 4px; background: #24272b; flex: none; }
    .cl { display: flex; align-items: center; gap: 2px; }
    .dots { width: 4px; height: 14px; background: repeating-linear-gradient(#cfd1d2 0 2px, transparent 2px 4px); border: solid #24272b; border-width: 0 1px; }
    .aq { width: 38px; height: 24px; }
    .fld { display: flex; align-items: center; justify-content: flex-end; width: 125px; padding: 0 6px; background: #1a1d1f; font-size: 13px; box-shadow: inset 0 1px #5b5e61, inset 0 -1px #5b5e61, inset -1px 0 #5b5e61; }
    .fld.c81 { width: 81px; gap: 5px; font-size: 12px; padding: 0 6px 0 3px; }
    .fld.c51 { width: 50px; justify-content: center; font-size: 12px; }
    .spin { display: grid; }
    .main-tr { display: flex; width: 276px; height: 32px; border: 2px solid #b9bbbd; border-radius: 3px; background: #626466; }
    .main-tr .b { flex: 1 1 50px; width: auto; color: #f0f0f0; }
    .main-tr .b.n { flex-basis: 36px; flex-grow: 0; }
    .main-tr .b.st { background: #a1a4a6; color: #111; }
    .to-loc { margin-left: 128px; }
    .lvl { width: 89px; height: 24px; background: #1a1d1f; border: 1px solid #5b5e61; border-radius: 3px; }
  `;

  private popup() {
    return html`<div class="popup" role="menu">
      ${MENU.map((g) => html`<ul>
        ${g.map((m) => html`<li><button class="${m.hot ? "hot" : ""} ${m.off ? "off" : ""}" role="menuitem" ?disabled=${m.off}>
          ${m.t}${m.key ? html`<span class="key">${m.key}</span>` : nothing}${m.sub ? ic("chevr", 12) : nothing}
        </button></li>`)}
      </ul>`)}
    </div>`;
  }

  private top() {
    return html`
      <header>
        <div class="title">
          <svg class="logo" viewBox="0 0 16 16" aria-hidden="true"><rect width="16" height="16" rx="1" fill="#1671a5"/><path d="M8.500 2.500L3.500 8l5 5.500" fill="none" stroke="#fff" stroke-width="2.600"/><path d="M10.500 5.500L13 8l-2.500 2.500L8 8z" fill="#fff"/></svg>
          <span>Cubase Elements プロジェクト - 名称未設定1</span>
          <div class="win">
            <button aria-label="最小化">${ic("min", 15)}</button><button aria-label="元に戻す">${ic("max", 15)}</button><button aria-label="閉じる">${ic("close", 15)}</button>
          </div>
        </div>
        <nav><ul class="menubar">
          ${MENUBAR.map((m) => html`<li><button class=${m === "Audio" ? "open" : ""}>${m}</button>${m === "Audio" ? this.popup() : nothing}</li>`)}
        </ul></nav>
      </header>
      <div class="toolbar">
        <div class="grp">${btn("undo", "元に戻す")}${btn("redo", "やり直す")}</div>
        <div class="grp from-menu">${tbtn("S", "red")}${tbtn("R")}${tbtn("W")}</div>
        <div class="grp">${btn("auto", "自動スクロール", "on")}${btn("down", "自動スクロール設定", "dk", 13)}</div>
        <div class="grp">
          ${btn("pointer", "選択", "on")}${btn("range", "範囲選択")}${btn("pencil", "鉛筆")}${btn("eraser", "消しゴム")}${btn("scissors", "はさみ")}
          ${btn("glue", "のり")}${btn("cross", "ミュート")}${btn("zoom", "ズーム")}${btn("line", "ライン")}${btn("speaker", "再生")}${btn("bucket", "カラー")}
        </div>
        <div class="grp dark">${btn("palette", "パレット", "", 22)}${btn("down", "パレット設定", "s20", 13)}</div>
        <div class="grp">${btn("xfade", "クロスフェード")}</div>
        <div class="grp gap5">${btn("snap", "スナップ", "on")}${drop("グリッド", "スナップタイプ", "w113")}</div>
        <div class="grp dark">${btn("hash", "グリッドタイプ", "", 18)}${drop("ズームに適応", "グリッドの種類", "w113")}</div>
        <div class="grp">${tbtn("Q", "q")}${drop("1/64", "クオンタイズ", "w125")}${btn("quant", "クオンタイズを適用", "", 20)}${tbtn("e", "s20")}</div>
        <div class="grp push">${btn("keys", "キーボード")}</div>
        <div class="grp">${btn("lay1", "左ゾーン", "on", 20)}${btn("lay2", "インスペクター", "", 20)}${btn("lay3", "下ゾーン", "on", 20)}${btn("lay4", "右ゾーン", "on", 20)}${btn("setup", "設定", "s20 dk", 20)}</div>
      </div>
      <ul class="status">${STATUS.map(([a, b]) => html`<li>${a ? html`<span class=${latin(a)}>${a}</span>` : nothing}<b class=${latin(b)}>${b}</b></li>`)}</ul>
      <ul class="info">
        <li><span>ファイル</span><b>Trap-Hi-Hat...02_140bpm_BB</b></li>
        <li class="end"><span></span><b>0</b></li>
        <li class="end"><span>スナップ</span><b>${pos("10.", "1.", "1.", "0")}</b></li>
        <li class="end"><span>フェードイン</span><b>${pos("0.", "0.", "0.", "0")}</b></li>
        <li class="end"><span>フェードアウト</span><b>${pos("0.", "0.", "0.", "0")}</b></li>
        <li><span>ボリューム</span><b class="wide">0.00 <span>dB</span></b></li>
        <li><span>フェーズを反転</span><b>オフ</b></li>
        <li><span>移調</span><b>0</b></li>
        <li><span>微調整</span><b>0</b></li>
        <li><span>ミュート</span><b>-</b></li>
        <li><span>ミュージカルモード</span><b>-</b></li>
        <li><span>アルゴリズム</span><b>Standard - Mix</b></li>
      </ul>
      <div class="overview">
        <svg width="100" height="28" aria-hidden="true"><rect x="1" width="98" height="28" fill="#4d5153"/>
          <g fill="#b9bbbc" stroke="#e4e5e5"><path d="M2.500 1.500h2v2h-2zM5.500 1.500h16v2h-16zM22.500 1.500h16v2h-16zM5.500 5.500h16v2h-16zM22.500 5.500h16v2h-16zM5.500 9.500h16v2h-16zM22.500 9.500h16v2h-16zM35.500 14.500h4v2h-4zM39.500 18.500h33v3h-33zM39.500 23.500h16v3h-16z"/></g></svg>
      </div>`;
  }

  private channel() {
    const ticks = [0, 86, 116, 141, 159, 183, 197, 204, 214];
    return html`<aside class="panel channel">
      <h2>チャンネル</h2>
      <button class="cbtn">Trap - Hi.</button>
      <div class="eq"><i></i></div>
      <button class="cbtn">Inser.${ic("insert", 16)}</button>
      <div class="slot"></div>
      <button class="cbtn">Sends${ic("send", 16)}</button>
      <div class="slot big"></div>
      <div class="grab"></div>
      <div class="quad">${tbtn("M")}${tbtn("S", "red")}<span class="b"></span>${tbtn("e")}</div>
      <div class="pan"><i></i>C</div>
      <div class="strip">
        <div class="fader">
          <svg width="28" height="260" aria-hidden="true"><path d="M14 18v227" stroke="#000" stroke-width="2"/>
            ${ticks.map((y) => svg`<path d="M18 ${y + 24.5}h8" stroke="#45484a"/>`)}</svg>
          <input type="range" aria-label="ボリューム" .value=${"83"} />
        </div>
        <svg width="28" height="260" aria-hidden="true">
          ${["0", "6", "12", "18", "24"].map((t, i) => svg`<text x="14" y=${26 + i * 31} fill="#6d7072" font-size="9" text-anchor="middle">${t}</text><path d="M3 ${24 + i * 31}h2M23 ${24 + i * 31}h2" stroke="#55585a"/>`)}
          <defs><linearGradient id="g" x2="0" y2="1"><stop offset="0" stop-color="#2fe5cf"/><stop offset="1" stop-color="#20d4f8"/></linearGradient></defs>
          <rect x="3" y="160" width="21" height="92" fill="url(#g)"/><path d="M13.500 160v92" stroke="#0d2b33"/><path d="M3 175.500h21M3 211.500h21M3 235.500h21" stroke="#1894a4"/>
        </svg>
      </div>
      <div class="quad"><span class="val">0.00</span><span class="val">-7.8</span></div>
      <div class="quad">${tbtn("R")}${tbtn("W")}${btn("rec", "録音可能", "rec", 20)}${btn("speaker", "モニター", "", 18)}</div>
      <div class="num">${ic("wave", 14)}<span>6</span></div>
      <div class="cname">Trap - Hi-<br />Hat Loop&nbsp; 02_</div>
    </aside>`;
  }

  private project() {
    const bars = Array.from({ length: 23 }, (_, i) => i + 1);
    return html`<section class="panel project">
      <div class="tracks">
        <div class="thead"><div class="grp">${btn("plus", "トラックを追加", "", 17)}${btn("preset", "プリセット", "", 17)}</div></div>
        <div class="tbody">
          <div>
            <div class="tr first"><div class="hd">${ic("folder", 20)}</div><div class="nm">入力/出力チャンネル</div></div>
            ${["piano", "piano", "piano", "wave", "piano", "wave"].map((k, i) => i < 5
              ? html`<div class="tr"><div class="hd">${ic(k, 18)}<span>${i + 1}</span></div><div class="ct"><div class="ms">${tbtn("M", "y")}${tbtn("S")}</div></div></div>`
              : html`<div class="tr sel"><div class="hd">${ic(k, 18)}<span>${i + 1}</span></div><div class="ct">
                  <div class="ms">${tbtn("M")}${tbtn("S", "red")}</div>
                  <div class="sub"><div class="grp">${btn("rec", "録音可能", "rec", 18)}${btn("speaker", "モニター", "", 18)}</div>
                  <div class="grp">${tbtn("e")}${btn("rings", "チェーン", "", 20)}</div><div class="grp">${tbtn("R")}${tbtn("W")}</div></div></div></div>`)}
          </div>
          <div class="meter"><i></i><i></i><i></i><i></i><i></i><i class="lv"></i><i class="hi"></i></div>
        </div>
        <div class="tfoot"><span>Standard</span><span class="push">${ic("down", 13)}</span>${ic("gear", 14)}</div>
      </div>
      <div class="split"></div>
      <div class="time">
        <div class="ruler">
          ${bars.map((b) => html`<span style=${styleMap({ left: barX(b) + "px" })}>${b}</span>`)}
          <svg class="head" width="17" height="9" aria-hidden="true"><path d="M0 0h17l-8.500 9z" fill="#fff"/></svg>
        </div>
        <div class="canvas">
          ${bars.map((b) => html`<i class="vl" style=${styleMap({ left: barX(b) + "px" })}></i>`)}
          ${[0, 1, 2, 3, 4, 5, 6].map((r) => html`<i class="hl" style=${styleMap({ top: 20 + r * 46 + "px" })}></i>`)}
          ${CLIPS.map((c) => html`<div class="clip ${c.cls ?? ""}" style=${styleMap({ left: barX(c.from) + "px", top: 23 + c.row * 46 + "px", width: barX(c.to) - barX(c.from) + "px" })}>
            ${c.art ? html`<svg width="360" height="41" aria-hidden="true">${c.art()}</svg>` : nothing}${c.name ? html`<span>${c.name}</span>` : nothing}
          </div>`)}
        </div>
        <div class="hscroll">
          <div class="sb"><button aria-label="左へ">${ic("chevl", 12)}</button><div class="thumb"></div><button class="push" aria-label="右へ">${ic("chevr", 12)}</button></div>
          <button class="sq" aria-label="表示メニュー">${ic("down", 11)}</button>
          <div class="zoomh">${ic("minus", 9)}${range("横ズーム", 44)}${ic("add", 9)}</div>
        </div>
        <i class="cursor" style=${styleMap({ left: barX(14) + "px" })}></i>
      </div>
      <div class="rail">
        <button class="sq tall" aria-label="ルーラー">${ic("down", 12)}</button>
        <button class="sq" aria-label="編集">${ic("pencil", 12)}</button>
        <div class="box">${range("波形ズーム", 80, "v short")}</div>
        <div class="box vs">${ic("chevu", 10)}${ic("chevd", 10)}</div>
        <button class="sq" aria-label="表示メニュー">${ic("down", 11)}</button>
        <div class="box zoomv">${ic("minus", 9)}${range("縦ズーム", 6, "v")}${ic("add", 9)}</div>
      </div>
    </section>`;
  }

  private editor() {
    const marks = Array.from({ length: 29 }, (_, i) => i);
    return html`<section class="panel editor">
      <div class="ebar">
        <div class="grp">${btn("pin", "固定", "", 20)}</div>
        <div class="grp"><button class="b on" aria-label="エディターをソロ"><svg width="22" height="22" viewBox="0 0 22 22"><circle cx="11" cy="11" r="7" fill="none" stroke="#1c1f22" stroke-width="2"/><text x="11" y="15" text-anchor="middle" font-size="12" font-weight="700" fill="#1c1f22">S</text></svg></button></div>
        <div class="grp mid">${btn("play", "試聴")}${btn("loop", "ループ試聴", "", 20)}</div>
        <span class="tri">${ic("left", 12)}</span>
        <div class="grp">${btn("auto", "自動スクロール", "on")}${btn("down", "自動スクロール設定", "dk", 13)}</div>
        <div class="grp">${btn("range", "範囲選択", "on")}${btn("pencil", "鉛筆", "", 20)}${btn("zoom", "ズーム")}${btn("scrub", "スクラブ", "", 20)}${btn("speaker", "再生", "", 20)}</div>
        <div class="grp">${btn("xfade", "ゼロクロス")}${btn("snap", "スナップ", "on")}</div>
        <div class="grp">${btn("hash", "グリッド", "", 18)}${drop("小節", "グリッドの種類", "w138")}</div>
        <div class="grp">${btn("note", "音符")}</div>
        <div class="grp">${drop("ズーム", "ズーム設定", "w75")}</div>
        <div class="grp dark gap5">${btn("eye", "表示", "", 18)}${btn("down", "表示設定", "", 13)}</div>
        <div class="grp gap15">${drop("Trap - Hi-Hat L.", "クリップ", "w125")}</div>
        <div class="grp push">${btn("out", "別ウィンドウ", "", 18)}${btn("setup", "設定", "s20 dk", 20)}</div>
      </div>
      <div class="egrid">
        <div class="db">db${ic("down", 9)}</div>
        <div class="ruler">
          ${marks.map((i) => html`<span style=${styleMap({ left: Math.round(1 + i * 54.16) + "px" })}>${i < 28 ? 1 + i * 16 : nothing}</span>`)}
          <svg class="head" width="9" height="9" aria-hidden="true"><path d="M0 0h9L0 9z" fill="#fff"/></svg>
          <i class="ecur"></i>
        </div>
        <ul class="scale">${[0, 1].map(() => html`<li><span>0</span><span>-6.0</span><span>-oo</span><span>-6.0</span><span>0</span></li>`)}</ul>
        <div class="wavearea">
          <svg class="wv" viewBox="0 0 14 306" preserveAspectRatio="none" aria-hidden="true">
            <rect width="14" height="306" fill="#2b455f"/>
            ${[48, 200].map((y) => svg`<path d="M1 ${y + 2}l1 3 1-4 1 3 1-6 1 5 1-3 1 4 1-6 1 5 1-3 1 3 2-2v52l-1 2-1-3-1 6-1-4-1 5-1-6-1 3-1-4-1 5-1-3-1 2-1-3z" fill="#7e96b3"/>`)}
            <path d="M0.500 0v306" stroke="#6a8aa8" stroke-dasharray="2 2"/>
          </svg>
          <span class="tag start">イベント開始</span><span class="tag endt">イベント終了</span><span class="tag s">S</span>
          <i class="ecur"></i>
        </div>
        <i></i>
        <div class="hscroll">
          <div class="sb"><button aria-label="左へ">${ic("chevl", 12)}</button><div class="thumb full"></div><button aria-label="右へ">${ic("chevr", 16)}</button></div>
          <div class="zoomh">${ic("minus", 9)}${range("横ズーム", 6)}${ic("add", 9)}</div>
        </div>
        <div class="rail">
          <button class="sq tall" aria-label="ルーラー">${ic("down", 12)}</button>
          <div class="box vs">${ic("chevu", 10)}${ic("chevd", 10)}</div>
          <div class="box zoomv">${ic("minus", 9)}${range("縦ズーム", 6, "v")}${ic("add", 9)}</div>
        </div>
      </div>
    </section>
    <nav class="zone">
      <button class="x" aria-label="閉じる">${ic("cross", 16)}</button>
      <button class="m">MixConsole</button><button class="cur jp">エディター</button><button class="jp n1">サンプラーコントロール</button><button class="jp n2">コードパッド</button><button class="n3">MIDI Remote</button>
    </nav>`;
  }

  private media() {
    return html`<aside class="side">
      <div class="stabs"><button>VSTi</button><button class="cur">メディア</button></div>
      <div class="panel media">
        <div class="searchrow">
          <div class="search">${ic("search", 14)}<input type="text" aria-label="検索" .value=${"hat"} /><button aria-label="クリア">${ic("clear", 9)}</button></div>
          <button class="sqb dim" aria-label="リスト">${ic("list", 16)}</button>
        </div>
        <div class="crumbs"><button class="bk" aria-label="戻る">${ic("back", 14)}</button><button aria-label="ホーム">${ic("home", 17)}</button>${ic("right", 9)}<span>...</span>${ic("right", 9)}<span>すべての項目を表示</span></div>
        <div class="frow">${drop("すべてのメディアタ.", "メディアタイプ")}
          <button class="sqb" aria-label="前へ">${ic("rew", 14)}</button><button class="sqb" aria-label="シャッフル">${ic("shuffle", 14)}</button>
          <button class="sqb dkk" aria-label="設定">${ic("gear", 14)}</button><button class="sqb on" aria-label="表示">${ic("frame", 17)}</button></div>
        <div class="cols">${FILTERS.map((f) => html`<div>${drop(f.name, f.name)}
          <div class="lst"><ul>${f.items.map((t) => html`<li>${t}</li>`)}</ul><div class="vbar ${f.cls}"><i></i></div></div></div>`)}</div>
        <div class="files">
          <div class="wrap"><table>
            <thead><tr><th><span>${ic("sort", 10)}Name</span></th></tr></thead>
            <tbody>${FILES.map((f, i) => html`<tr class=${i === 4 ? "pick" : ""}><td><span>${ic("wave", 17)}${f}</span></td></tr>`)}</tbody>
          </table></div>
          <div class="vbar"><i></i></div>
        </div>
        <div class="hbar"><i></i></div>
        <div class="prev">
          <svg viewBox="0 0 202 30" preserveAspectRatio="none" aria-hidden="true">
            ${[29, 59, 88, 118, 147, 177].map((x) => svg`<path d="M${x + 0.5} 0v16" stroke=${x === 147 ? "#888" : "#3f4245"}/>`)}
            ${[9, 25].map((y) => svg`<path d="M0 ${y + 0.5}h202" stroke="#f2f2f2"/>${Array.from({ length: 33 }, (_, i) => svg`<path d="M${2 + i * 6} ${y - 2}v5" stroke="#f2f2f2" stroke-width=${i % 3 ? 2 : 1}/>`)}`)}
            <path d="M0 0h9L1 9v21H0z" fill="#fff"/>
          </svg>
          <div class="m1"><span>0</span><span>5</span></div>
          <div class="m2"><span>140.000 BPM</span><span>Loop 02_140bpm_BB</span></div>
        </div>
        <div class="pt">
          <div class="grp">${btn("play", "再生", "", 15)}${btn("stop", "停止", "on", 16)}${btn("loop", "ループ", "", 16)}</div>
          <div class="grp vol">${ic("ramp", 17)}${range("音量", 74)}</div>
          <div class="grp">${btn("dgate", "自動再生", "on", 16)}${btn("beats", "ビート", "", 16)}</div>
        </div>
        <div class="pt">
          <div class="grp dark">${tbtn("-", "plain", "キー")}${drop("-", "スケール", "w38")}</div>
          <div class="grp">${btn("note8", "音符", "", 18)}${tbtn("1/2", "plain")}${tbtn("2x", "plain")}${btn("tape", "テープ", "", 14)}</div>
        </div>
      </div>
    </aside>`;
  }

  private bottom() {
    const dots = html`<i class="dots"></i>`;
    return html`<footer class="transport">
      <div class="grp">${btn("clock", "遅延補正", "", 20)}</div>
      <div class="cl"><div class="grp dark">${btn("dot", "録音モード", "", 20)}${btn("down", "録音モード設定", "s20", 13)}</div>${dots}</div>
      <div class="cl"><div class="grp dark">${btn("wave", "オーディオ録音", "", 20)}${btn("down", "オーディオ録音設定", "s20", 13)}</div>${dots}</div>
      <div class="cl"><div class="grp dark">${btn("midi", "MIDI録音")}${drop("新規パート", "MIDI録音モード", "w88")}${drop("ミックス", "サイクル録音", "w100")}</div>${dots}</div>
      <div class="grp"><button class="aq">AQ</button></div>
      <div class="grp to-loc">${btn("locl", "左ロケーター")}<span class="fld">${pos("1.", "1.", "1.", "0")}</span></div>
      <div class="grp gap5">${btn("locr", "右ロケーター")}<span class="fld">${pos("1.", "1.", "1.", "0")}</span></div>
      <div class="grp">${btn("punchi", "パンチイン", "", 20)}${btn("puncho", "パンチアウト", "", 20)}</div>
      <div class="cl"><div class="main-tr">${btn("prev", "前へ", "n")}${btn("next", "次へ", "n")}${btn("loopo", "サイクル")}${btn("stopo", "停止", "st")}${btn("playo", "再生")}${btn("reco", "録音")}</div>${dots}</div>
      <div class="grp"><button class="aq b" aria-label="プリロール">${ic("moon", 20)}</button></div>
      <div class="cl"><div class="grp dark">${btn("note", "表示形式", "", 20)}<span class="fld">${pos("13.", "4.", "4.", "85")}</span></div>${dots}</div>
      <div class="cl"><div class="grp">${btn("tempo", "テンポトラック", "on")}<span class="fld c81">180.000<span class="spin">${ic("up", 9)}${ic("down", 9)}</span></span><span class="fld c51">4/4</span><button class="w50">Tap</button>${btn("down", "テンポ設定", "dk", 13)}</div>${dots}</div>
      <div class="cl push"><div class="grp">${btn("metro", "メトロノーム", "", 20)}${btn("gear", "メトロノーム設定", "s20", 14)}</div>${dots}</div>
      <div class="cl"><svg class="lvl" viewBox="0 0 87 22" aria-hidden="true"><path d="M25.500 0v22" stroke="#4b4e50"/><path d="M60 13h7v9h-7zM68 13h7v9h-7z" fill="#22d7e6"/><path d="M80 1h4v21h-4z" fill="#e60f0f"/></svg>${dots}</div>
    </footer>`;
  }

  render() {
    return html`${this.top()}
      <div class="main">${this.channel()}<main class="center">${this.project()}${this.editor()}</main>${this.media()}</div>
      ${this.bottom()}`;
  }
}
